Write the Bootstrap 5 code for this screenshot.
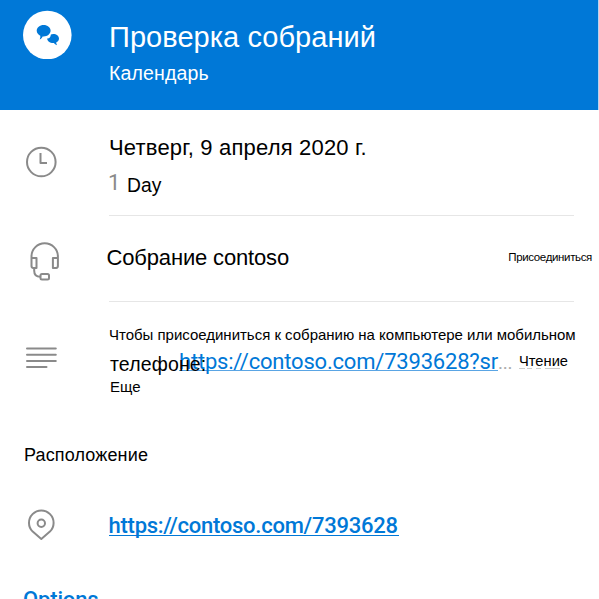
<!DOCTYPE html>
<html lang="ru">
<head>
<meta charset="utf-8">
<meta name="viewport" content="width=device-width, initial-scale=1">
<title>Проверка собраний</title>
<link href="https://cdn.jsdelivr.net/npm/bootstrap@5.3.0/dist/css/bootstrap.min.css" rel="stylesheet">
<style>
  body { font-family: "Liberation Sans", Arial, sans-serif; color: #000; background: #fff; height: 599px; overflow: hidden; }
  .meeting { width: 599px; height: 599px; }
  .masthead { width: 599px; height: 110px; background: #0078d7; border-right: 1px solid #b5d5f0; padding-top: 10px; }
  .side { width: 109px; flex: none; }
  .side svg { display: block; fill: none; stroke: #8a8a8a; stroke-width: 2; stroke-linecap: round; stroke-linejoin: round; }
  .side .avatar { width: 49px; height: 49px; margin-left: 23px; stroke: none; }
  .title { font-size: 29px; line-height: 40px; letter-spacing: .05px; margin-top: 7px; }
  .subtitle { font-size: 19.5px; line-height: 28px; letter-spacing: .15px; margin-top: 2px; }
  .main { width: 465px; flex: none; }
  .ruled { border-bottom: 1px solid #e6e6e6; }
  .when { height: 106px; }
  .when .main { padding-top: 23px; }
  .date { font-size: 22px; line-height: 30px; letter-spacing: .18px; }
  .span-day { font-size: 19.3px; line-height: 28px; margin-top: 9px; gap: 8px; }
  .count { font-family: Roboto, sans-serif; font-size: 22px; color: #8a8a8a; margin: -3px 1px 0 -1px; width: 10px; }
  .call { height: 86px; }
  .call .main { padding-top: 26px; }
  .subject { font-size: 22px; line-height: 32px; letter-spacing: -.16px; margin-left: -2.5px; }
  .join { font-size: 11.5px; line-height: 30px; letter-spacing: -.35px; margin-right: -18px; color: #000; text-decoration: none; }
  .notes { height: 137px; }
  .notes .main { padding-top: 22px; }
  .fine { font-size: 15px; line-height: 22px; }
  .fine-first { letter-spacing: -.015px; }
  .fine-last { margin: -2px 0 0 1px; }
  .phone { font-size: 19.5px; line-height: 28px; letter-spacing: .15px; width: 69px; flex: none; z-index: 1; margin-left: 1px; }
  .url { font-family: Roboto, sans-serif; color: #0078d7; line-height: 28px; text-decoration: none; }
  .url span { display: block; }
  .url-join { font-size: 22px; letter-spacing: -.2px; line-height: 26px; flex: none; width: 319px; height: 22px; margin-top: -1px; border-bottom: 1px solid #5aa5e4; }
  .more { font-family: Roboto, sans-serif; font-size: 19px; line-height: 25px; letter-spacing: -.2px; color: #aaa; width: 21px; flex: none; }
  .read { font-size: 14.7px; line-height: 26px; height: 19px; margin-top: -2px; width: 50px; }
  .read::after { content: ""; display: block; width: 41px; height: 1px; margin-top: -6px;
    background: linear-gradient(90deg, #ccc 0 6px, #fff 6px 8px, #ccc 8px 13px, #fff 13px 17px, #ccc 17px 22px, #fff 22px 26px, #ccc 26px); }
  .heading { font-size: 18px; line-height: 26px; letter-spacing: .14px; padding-left: 24px; margin-top: 3px; }
  .place { height: 86px; margin-top: 32px; }
  .url-place { font-size: 22px; font-weight: 500; letter-spacing: -.25px; width: 290px; height: 36px; margin-left: -.5px; }
  .url-place span { line-height: 30px; height: 25px; margin-top: 11px; border-bottom: 1px solid #0078d7; }
  .options { font-size: 22px; font-weight: 500; letter-spacing: -.15px; padding-left: 23px; }
</style>
</head>
<body>
<main class="meeting d-flex flex-column">
  <header class="masthead d-flex text-white flex-shrink-0">
    <div class="side">
      <svg class="avatar" viewBox="0 0 49 49">
        <circle cx="24.3" cy="25" r="24.3" fill="#fff"/>
        <path fill="#0078d7" d="M20.600 14.900c4 0 7 2.500 7 5.700s-3 5.900-7 5.900l-1 0c-.6 1.400-1.300 2.300-2.900 2.900.6-1.200.8-2.300.6-3.600-2.200-1-3.600-2.900-3.600-5.200 0-3.200 3.100-5.700 6.900-5.700z"/>
        <path fill="#0078d7" d="M30.200 23.900c3.300 0 5.800 2 5.800 4.700 0 1.900-1.200 3.200-2.800 4 0 1 .3 1.700.9 2.600-1.600-.4-2.500-1.100-3.100-2.100h-.8c-3.500 0-6-1.900-6-4.500 2.600-.2 3.200-1.700 3.700-4.200.7-.3 1.500-.5 2.300-.5z"/>
      </svg>
    </div>
    <div>
      <div class="title">Проверка собраний</div>
      <div class="subtitle">Календарь</div>
    </div>
  </header>

  <section class="when d-flex flex-shrink-0">
    <div class="side">
      <svg width="109" height="106"><circle cx="41.300" cy="52" r="14.300"/><path stroke-linecap="butt" d="M40.500 43v10h6.500"/></svg>
    </div>
    <div class="main ruled">
      <div class="date">Четверг, 9 апреля 2020 г.</div>
      <div class="span-day d-flex"><span class="count">1</span><span>Day</span></div>
    </div>
  </section>

  <section class="call d-flex flex-shrink-0">
    <div class="side">
      <svg width="109" height="86"><path d="M31.500 43V40.500a13.200 13.200 0 0 1 26.400 0V43M31.500 42h5v10h-3.200q-1.800-.2-1.800-2zM57.900 42h-5v10h3.200q1.800-.2 1.800-2zM34.200 52.500v2.300q0 6 6 6"/><rect x="40.500" y="58" width="8.500" height="5.500" rx="1.500"/></svg>
    </div>
    <div class="main ruled d-flex justify-content-between text-nowrap">
      <div class="subject">Собрание contoso</div>
      <a class="join" href="#">Присоединиться</a>
    </div>
  </section>

  <section class="notes d-flex flex-shrink-0 text-nowrap">
    <div class="side">
      <svg width="109" height="90"><path d="M27 46.500h28.800M27 52.800h28.800M27 59h28.800M27 65h19.500"/></svg>
    </div>
    <div class="main">
      <div class="fine fine-first">Чтобы присоединиться к собранию на компьютере или мобильном</div>
      <div class="d-flex pt-1">
        <span class="phone position-relative">телефоне:</span>
        <a class="url url-join" href="#">https://contoso.com/7393628?sr</a>
        <span class="more">...</span>
        <span class="read">Чтение</span>
      </div>
      <div class="fine fine-last">Еще</div>
    </div>
  </section>

  <div class="heading flex-shrink-0">Расположение</div>
  <section class="place d-flex flex-shrink-0">
    <div class="side">
      <svg width="109" height="80"><path d="M41.300 39l-8.600-7.400a12.300 12.300 0 1 1 17.200 0z"/><circle cx="41.300" cy="23.300" r="3.700"/></svg>
    </div>
    <a class="url url-place" href="#"><span>https://contoso.com/7393628</span></a>
  </section>
  <a class="url options" href="#">Options</a>
</main>
<script src="https://cdn.jsdelivr.net/npm/bootstrap@5.3.0/dist/js/bootstrap.bundle.min.js"></script>
</body>
</html>
